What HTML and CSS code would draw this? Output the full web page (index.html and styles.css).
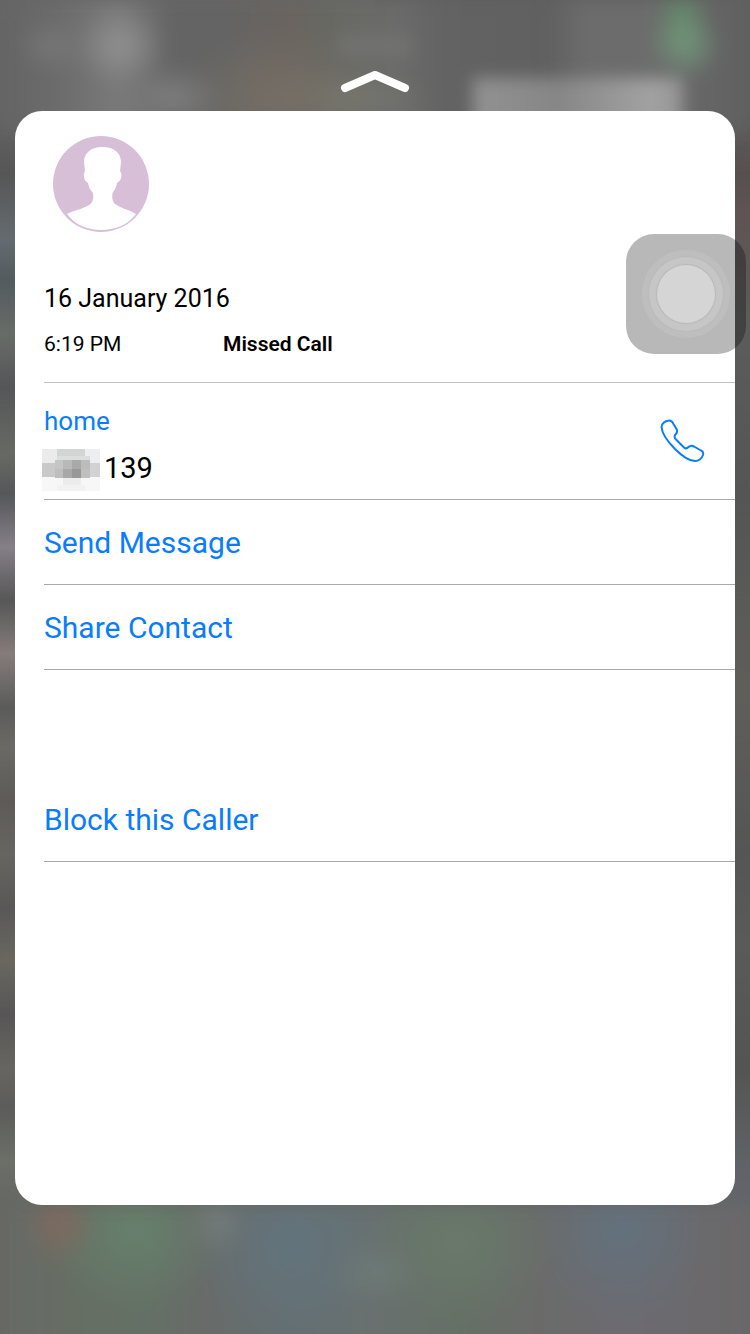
FILE: index.html
```html
<!DOCTYPE html>
<html lang="en">
<head>
<meta charset="utf-8">
<meta name="viewport" content="width=device-width, initial-scale=1">
<title>Missed Call</title>
<link rel="stylesheet" href="styles.css">
</head>
<body>
<div class="screen">
  <header class="top">
    <button class="grabber" type="button" aria-label="Show actions">
      <svg width="70" height="24" viewBox="0 0 70 24"><path d="M5 19 L35 6 L65 19" fill="none" stroke="#fff" stroke-width="8" stroke-linecap="round" stroke-linejoin="round"/></svg>
    </button>
  </header>

  <main class="card">
    <svg class="avatar" width="96" height="96" viewBox="0 0 96 96" aria-hidden="true">
      <circle cx="48" cy="48" r="48" fill="#d7bfd8"/>
      <path fill="#fff" d="M49.500 11C38 11 31 17 31 26L32 35C30.500 37 30.500 42 32.500 45L35 47C36 52 38 55 40 57C40.500 61 40.500 64 38.500 67C34 72 22 74 14 78C22 89 35 94 48 94C62 94 75 89 83 78C77 74 66 72 61 67C59 64 59 61 59.500 57C61 55 63 52 64 47L66.500 45C69 42 69 37 67 35L68 26C68 17 61 11 49.500 11Z"/>
    </svg>
    <section class="call">
      <h1 class="date">16 January 2016</h1>
      <div class="call-line">
        <time class="time">6:19 PM</time>
        <strong class="kind">Missed Call</strong>
      </div>
    </section>
    <section class="number">
      <div class="number-text">
        <span class="label">home</span>
        <div class="digits">
          <svg width="58" height="43" viewBox="0 0 58 43" shape-rendering="crispEdges" aria-hidden="true">
            <path fill="#f7f7f7" d="M0 28h58v14H0z"/>
            <path fill="#ebebeb" d="M0 0h15v14H0z"/>
            <path fill="#d3d5d4" d="M15 0h28v7H15z"/>
            <path fill="#edeef2" d="M43 0h15v14H43z"/>
            <path fill="#dcdddd" d="M15 7h33v4H15z"/>
            <path fill="#c9c9c9" d="M0 14h13v14H0z"/>
            <path fill="#c5c5c5" d="M13 11h8v9h-8z"/>
            <path fill="#b9b9b9" d="M21 11h9v9h-9z"/>
            <path fill="#a9a9a9" d="M30 11h9v9h-9z"/>
            <path fill="#bcbcbc" d="M39 11h9v9h-9z"/>
            <path fill="#bebebe" d="M13 20h8v9h-8z"/>
            <path fill="#a8a8a8" d="M21 20h9v9h-9z"/>
            <path fill="#989898" d="M30 20h9v9h-9z"/>
            <path fill="#bfc0bd" d="M39 20h9v9h-9z"/>
            <path fill="#d2d2d4" d="M48 14h10v14H48z"/>
            <path fill="#ececec" d="M21 29h18v7H21z"/>
            <path fill="#f2f2f2" d="M15 36h28v6H15z"/>
          </svg>
          <span>139</span>
        </div>
      </div>
      <button class="dial" type="button" aria-label="Call home">
        <svg width="46" height="44" viewBox="0 0 46 44"><path d="M9 1.500C11.500 1 12.500 3 13.500 5L16.500 10C18 12.500 17 14 15.500 15.500C14 17 14.500 19 16 20.500L24 28.500C25.500 30 27 29.500 28.500 28C30 26.500 32 26.500 34 27.500L41 31.500C43.500 32.500 43.500 34 43 36C41.500 40 39 42 35 42C29 42 21 36 15 30C8 23 2 14 1.500 8C1.500 5 4.500 2 9 1.500Z" fill="none" stroke="#0a7cff" stroke-width="2" stroke-linejoin="round"/></svg>
      </button>
    </section>
    <button class="action" type="button">Send Message</button>
    <button class="action" type="button">Share Contact</button>
    <button class="action action-block" type="button">Block this Caller</button>
  </main>

  <footer class="bottom"></footer>
  <button class="assistive" type="button" aria-label="AssistiveTouch"><span class="ring"><span class="ring-mid"><span class="dot"></span></span></span></button>
</div>
</body>
</html>
```

FILE: styles.css
```css
* { box-sizing: border-box; }

body {
  margin: 0;
  font-family: Roboto, "Noto Sans", sans-serif;
  color: #000;
}

button {
  margin: 0;
  padding: 0;
  border: 0;
  background: none;
  font: inherit;
  cursor: pointer;
}

svg { display: block; }

.screen {
  position: relative;
  display: flex;
  flex-direction: column;
  min-height: 100vh;
  overflow: hidden;
  background:
    linear-gradient(#666 8%, #565656 13%, #646b70 18%, #535b5f 21%, #686c68 25%, #545658 29%, #666a63 34%, #555759 37%, #857f88 41%, #575757 45%, #857c7b 49%, #5b5b5a 53%, #6a6964 56%, #5d5a58 60%, #676560 64%, #5a5758 68%, #69675f 72%, #585556 76%, #676560 80%, #5c5c5a 83%, #6b6f67 87%, #656662 91%) left / 50% 100% no-repeat,
    linear-gradient(#606060 8%, #574f4e 13%, #605353 16%, #5b5c5b 24%, #545554 37%, #5f5e59 52%, #555 64%, #5a5b59 71%, #545452 80%, #5f6266 87%, #65666b 91%) right / 50% 100% no-repeat;
}

.top,
.bottom {
  position: relative;
}

/* Softly blurred home screen above and below the card */
.top::before,
.bottom::before {
  content: "";
  position: absolute;
  inset: 0 0 -20px;
  filter: blur(8px);
}

.top {
  display: flex;
  justify-content: center;
  height: 111px;
  padding-top: 69px;
}

.top::before {
  background:
    radial-gradient(ellipse 5% 34px at 91.300% 46px, #72957a, transparent),
    linear-gradient(90deg, transparent 87%, #658a6c 91%, transparent 95%) top / 100% 40px no-repeat,
    linear-gradient(90deg, #929292, #868686 40%, #a2a2a2 85%, #949494) 87.500% 78px / 28% 60px no-repeat,
    radial-gradient(ellipse 6% 40px at 16% 46px, #909090, transparent),
    radial-gradient(ellipse 5% 26px at 7% 46px, #777, transparent),
    radial-gradient(ellipse 7% 34px at 23% 98px, #7e7e7e, transparent),
    radial-gradient(ellipse 13% 70px at 37% 98px, #756e65, transparent),
    radial-gradient(ellipse 12% 30px at 46% 98px, #777970, transparent),
    linear-gradient(90deg, #727270, #727270) 50% 36px / 10% 20px no-repeat,
    linear-gradient(90deg, #646464, #6c6c6c 8%, #7a7a7a 16%, #646464 23%, #646464 30%, #6a645f 38%, #686862 43%, #6b6b6b 53%, #636363 59%, #606060 73%, #6c6c6c 78%, #6c6c6c 87%, #606060);
}

.grabber {
  position: relative;
  height: 24px;
}

.card {
  position: relative;
  z-index: 1;
  flex: 1;
  margin: 0 15px;
  padding: 25px 0 29px 29px;
  border-radius: 27px;
  background: #fff;
}

.avatar { margin-left: 9px; }

.call {
  height: 151px;
  padding-top: 50px;
  border-bottom: 1px solid #c2c2c2;
}

.date {
  margin: 0;
  font-size: 25px;
  line-height: 34px;
  font-weight: 400;
}

.call-line {
  display: grid;
  grid-template-columns: 179px 1fr;
  margin-top: 12px;
  font-size: 21px;
  line-height: 32px;
}

.kind { font-weight: 600; }

.number {
  display: flex;
  justify-content: space-between;
  align-items: center;
  height: 117px;
  padding-right: 29px;
  border-bottom: 1px solid #aaa;
}

.number-text { padding-top: 12px; }

.label {
  display: block;
  color: #0a7cff;
  font-size: 26px;
  line-height: 36px;
}

.digits {
  display: flex;
  align-items: center;
  gap: 4px;
  height: 43px;
  margin: 10px 0 0 -2px;
  font-size: 29px;
  line-height: 36px;
}

.digits span { padding-bottom: 4px; }

.action {
  display: block;
  width: 100%;
  height: 85px;
  padding-top: 2px;
  border-bottom: 1px solid #aaa;
  color: #0a7cff;
  font-size: 30px;
  line-height: 40px;
  text-align: left;
}

.action-block { margin-top: 107px; }

.bottom { height: 129px; }

.bottom::before {
  background:
    radial-gradient(ellipse 5% 44px at 8% 18px, #80695f, transparent),
    radial-gradient(ellipse 4% 38px at 29% 16px, #747c7b, transparent),
    radial-gradient(ellipse 6% 32px at 50% 68px, #6d7a76, transparent),
    radial-gradient(ellipse 12% 80px at 18% 26px, #66806c, transparent),
    radial-gradient(ellipse 13% 90px at 39% 40px, #63747c, transparent),
    radial-gradient(ellipse 13% 80px at 61% 38px, #69796b, transparent),
    radial-gradient(ellipse 12% 90px at 83% 24px, #63717c, transparent),
    linear-gradient(90deg, #686966, #656f63 12%, #647065 20%, #686b69 27%, #646f73 39%, #69706f 50%, #657065 61%, #6a6b69 72%, #6c6b72 83%, #6a6868);
}

.assistive {
  position: absolute;
  z-index: 2;
  top: 234px;
  right: 4px;
  display: grid;
  place-items: center;
  width: 120px;
  height: 120px;
  border-radius: 28px;
  background: rgba(0, 0, 0, 0.28);
}

.ring,
.ring-mid {
  display: grid;
  place-items: center;
  border-radius: 50%;
}

.ring {
  width: 88px;
  height: 88px;
  background: #bebebe;
}

.ring-mid {
  width: 74px;
  height: 74px;
  background: #c6c6c6;
  box-shadow: 0 0 1px 1px #bababa;
}

.dot {
  width: 58px;
  height: 58px;
  border-radius: 50%;
  background: #d5d5d5;
  box-shadow: 0 0 1px 1px #b9b9b9;
}
```
